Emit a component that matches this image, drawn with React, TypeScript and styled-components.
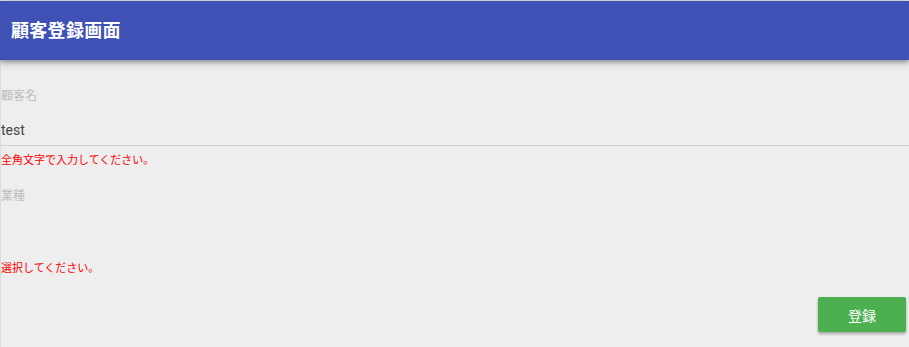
import styled, { createGlobalStyle } from 'styled-components';

const GlobalStyle = createGlobalStyle`
    html, body {
        margin: 0;
        padding: 0;
        background-color: #eeeeee;
    }
    body {
        font-family: Roboto, "Noto Sans CJK JP", sans-serif;
    }
`;

const Page = styled.div`
    border-top: 1px solid #dcdcdc;
    min-height: 346px;
    display: flex;
    flex-direction: column;
`;

const AppBar = styled.header`
    height: 59px;
    background-color: #3f51b5;
    display: flex;
    align-items: center;
    padding-left: 11px;
    box-shadow: 0 2px 4px rgba(0, 0, 0, 0.3), 0 4px 8px rgba(0, 0, 0, 0.15);
    position: relative;
    z-index: 1;
`;

const Title = styled.h1`
    margin: 0 0 4px;
    color: #fff;
    font-family: "Noto Sans CJK JP", sans-serif;
    font-size: 18px;
    font-weight: 700;
    letter-spacing: 0.3px;
`;

const Content = styled.main`
    flex: 1;
    border-left: 1px solid #dddddd;
    padding-top: 28px;
    display: flex;
    flex-direction: column;
`;

const Field = styled.div<{ $gap?: number }>`
    display: flex;
    flex-direction: column;
    margin-top: ${(p) => p.$gap ?? 0}px;
`;

const Label = styled.label`
    color: #bdbdbd;
    font-family: "Noto Sans CJK JP", sans-serif;
    font-size: 12px;
    line-height: 14px;
`;

const Input = styled.input`
    border: none;
    border-bottom: 1px solid #d0d0d0;
    background: transparent;
    outline: none;
    padding: 0;
    margin-top: 12px;
    height: 31px;
    font-family: Roboto, "Noto Sans CJK JP", sans-serif;
    font-size: 14px;
    color: #444;
    box-sizing: content-box;
    width: 100%;
`;

const SelectArea = styled.div<{ $height: number }>`
    height: ${(p) => p.$height}px;
`;

const ErrorText = styled.div<{ $top: number }>`
    margin-top: ${(p) => p.$top}px;
    color: #ff0000;
    font-family: "Noto Sans CJK JP", sans-serif;
    font-size: 11px;
    line-height: 14px;
`;

const Actions = styled.div`
    display: flex;
    justify-content: flex-end;
    padding: 23px 3px 0 0;
`;

const SubmitButton = styled.button`
    width: 88px;
    height: 35px;
    border: none;
    border-radius: 2px;
    background-color: #4caf50;
    color: #fff;
    font-family: "Noto Sans CJK JP", sans-serif;
    font-size: 14px;
    box-shadow: 0 2px 3px rgba(0, 0, 0, 0.3);
    cursor: pointer;
`;

export default function App() {
    return (
        <>
            <GlobalStyle />
            <Page>
                <AppBar>
                    <Title>顧客登録画面</Title>
                </AppBar>
                <Content>
                    <Field>
                        <Label>顧客名</Label>
                        <Input defaultValue="test" />
                        <ErrorText $top={6}>全角文字で入力してください。</ErrorText>
                    </Field>
                    <Field $gap={22}>
                        <Label>業種</Label>
                        <SelectArea $height={58} />
                        <ErrorText $top={0}>選択してください。</ErrorText>
                    </Field>
                    <Actions>
                        <SubmitButton>登録</SubmitButton>
                    </Actions>
                </Content>
            </Page>
        </>
    );
}
